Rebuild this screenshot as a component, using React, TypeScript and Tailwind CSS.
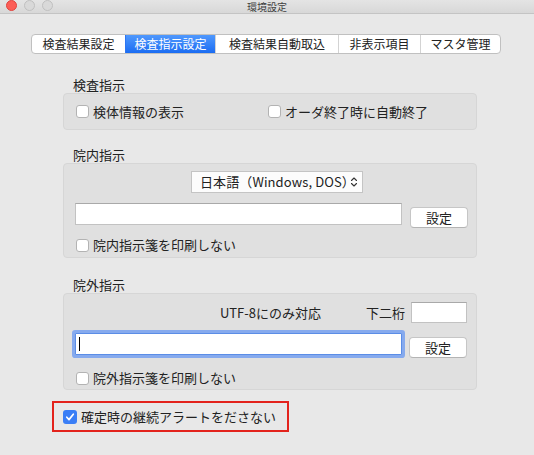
import { useState } from 'react';

const tabs = [
  { label: '検査結果設定', w: 'w-[93px]' },
  { label: '検査指示設定', w: 'w-[90px]' },
  { label: '検査結果自動取込', w: 'w-[123px]' },
  { label: '非表示項目', w: 'w-[82px]' },
  { label: 'マスタ管理', w: 'w-[80px]' },
];

function Checkbox({ checked, label }: { checked?: boolean; label: string }) {
  return (
    <label className="flex items-center gap-[4px] h-[14px]">
      {checked ? (
        <span className="w-[14px] h-[14px] rounded-[3px] bg-[#3a7ef6] flex items-center justify-center">
          <svg width="10" height="10" viewBox="0 0 10 10">
            <path d="M1.8 5.2 L4 7.6 L8.3 2.2" fill="none" stroke="#fff" strokeWidth="1.7" strokeLinecap="round" strokeLinejoin="round" />
          </svg>
        </span>
      ) : (
        <span className="w-[13px] h-[13px] rounded-[3px] border border-[#b3b3b3] bg-white" />
      )}
      <span className="text-[13px] leading-[14px]">{label}</span>
    </label>
  );
}

function SetButton() {
  return (
    <button className="w-[58px] h-[21px] rounded-[4px] border border-[#c6c6c6] border-b-[#b4b4b4] bg-white text-[13px] leading-[19px] text-[#222]">
      設定
    </button>
  );
}

function Light({ color }: { color: string }) {
  return <span className={`w-[11px] h-[11px] rounded-full ${color}`} />;
}

export default function App() {
  const [tab] = useState(1);

  return (
    <div className="w-[534px] h-[455px] bg-[#e8e8e8] text-[#222] font-['Noto_Sans_CJK_JP',sans-serif] overflow-hidden">
      {/* title bar */}
      <div className="relative h-[14px] bg-linear-to-b from-[#e4e4e4] to-[#d8d8d8] border-b border-[#c4c4c4] flex items-center justify-center">
        <div className="absolute left-[6px] top-[0px] flex gap-[7px]">
          <Light color="bg-[#fc5e57] border border-[#e0443e]" />
          <Light color="bg-[#d9d9d9] border border-[#c0c0c0]" />
          <Light color="bg-[#d9d9d9] border border-[#c0c0c0]" />
        </div>
        <span className="text-[10px] leading-[12px] text-[#404040]">環境設定</span>
      </div>

      {/* tabs */}
      <div className="ml-[31px] mt-[20px] flex w-[470px] h-[20px] rounded-[4px] border border-[#c0c0c0] overflow-hidden bg-white">
        {tabs.map((t, i) => (
          <div
            key={t.label}
            className={`${t.w} h-full flex items-center justify-center text-[12px] ${i > 0 ? 'border-l border-[#d3d3d3]' : ''} ${
              i === tab ? 'bg-linear-to-b from-[#4f98fd] to-[#1a6cf2] text-white border-l-[#2d76f2]' : 'text-[#222]'
            }`}
          >
            {t.label}
          </div>
        ))}
      </div>

      {/* 検査指示 */}
      <div className="ml-[63px] w-[414px] mt-[23px]">
        <div className="h-[16px] leading-[16px] pl-[10px] text-[13px]">検査指示</div>
        <div className="h-[37px] rounded-[4px] border border-[#d6d6d6] bg-[#e0e0e0] flex items-center pl-[12px]">
          <div className="w-[192px]">
            <Checkbox label="検体情報の表示" />
          </div>
          <Checkbox label="オーダ終了時に自動終了" />
        </div>
      </div>

      {/* 院内指示 */}
      <div className="ml-[63px] w-[414px] mt-[17px]">
        <div className="h-[16px] leading-[16px] pl-[10px] text-[13px]">院内指示</div>
        <div className="h-[95px] rounded-[4px] border border-[#d6d6d6] bg-[#e0e0e0] pt-[7px] pl-[11px] flex flex-col">
          <div className="ml-[116px] w-[172px] h-[22px] border border-[#c4c4c4] bg-[#fcfcfc] flex items-center pl-[8px] pr-[4px]">
            <span className="text-[13px] flex-1 tracking-[0.1px]">日本語（Windows, DOS）</span>
            <svg width="8" height="12" viewBox="0 0 8 12">
              <path d="M1.5 4.5 L4 2 L6.5 4.5 M1.5 7.5 L4 10 L6.5 7.5" fill="none" stroke="#333" strokeWidth="1.1" strokeLinecap="round" strokeLinejoin="round" />
            </svg>
          </div>
          <div className="mt-[10px] flex items-start gap-[8px]">
            <div className="w-[327px] h-[22px] border border-[#c2c2c2] border-t-[#a9a9a9] bg-white" />
            <div className="mt-[1px]">
              <SetButton />
            </div>
          </div>
          <div className="mt-[10px] pl-[1px]">
            <Checkbox label="院内指示箋を印刷しない" />
          </div>
        </div>
      </div>

      {/* 院外指示 */}
      <div className="ml-[63px] w-[414px] mt-[19px]">
        <div className="h-[16px] leading-[16px] pl-[10px] text-[13px]">院外指示</div>
        <div className="h-[97px] rounded-[4px] border border-[#d6d6d6] bg-[#e0e0e0] pt-[8px] pl-[11px] pr-[9px] flex flex-col">
          <div className="flex items-center justify-end h-[21px]">
            <span className="text-[13px]">UTF-8にのみ対応</span>
            <span className="text-[13px] ml-[45px]">下二桁</span>
            <div className="ml-[6px] w-[56px] h-[21px] border border-[#c2c2c2] border-t-[#a9a9a9] bg-white" />
          </div>
          <div className="mt-[10px] flex items-start gap-[7px]">
            <div className="w-[328px] h-[22px] border border-[#5b8de6] bg-white shadow-[0_0_0_3px_#86aaee] rounded-[1px] flex items-center pl-[3px]">
              <span className="w-[1px] h-[14px] bg-black" />
            </div>
            <div className="mt-[1px]">
              <SetButton />
            </div>
          </div>
          <div className="mt-[13px] pl-[1px]">
            <Checkbox label="院外指示箋を印刷しない" />
          </div>
        </div>
      </div>

      {/* 継続アラート */}
      <div className="ml-[52px] mt-[11px] w-[237px] h-[31px] border-2 border-[#e3231c] flex items-center pl-[9px]">
        <Checkbox checked label="確定時の継続アラートをださない" />
      </div>
    </div>
  );
}
